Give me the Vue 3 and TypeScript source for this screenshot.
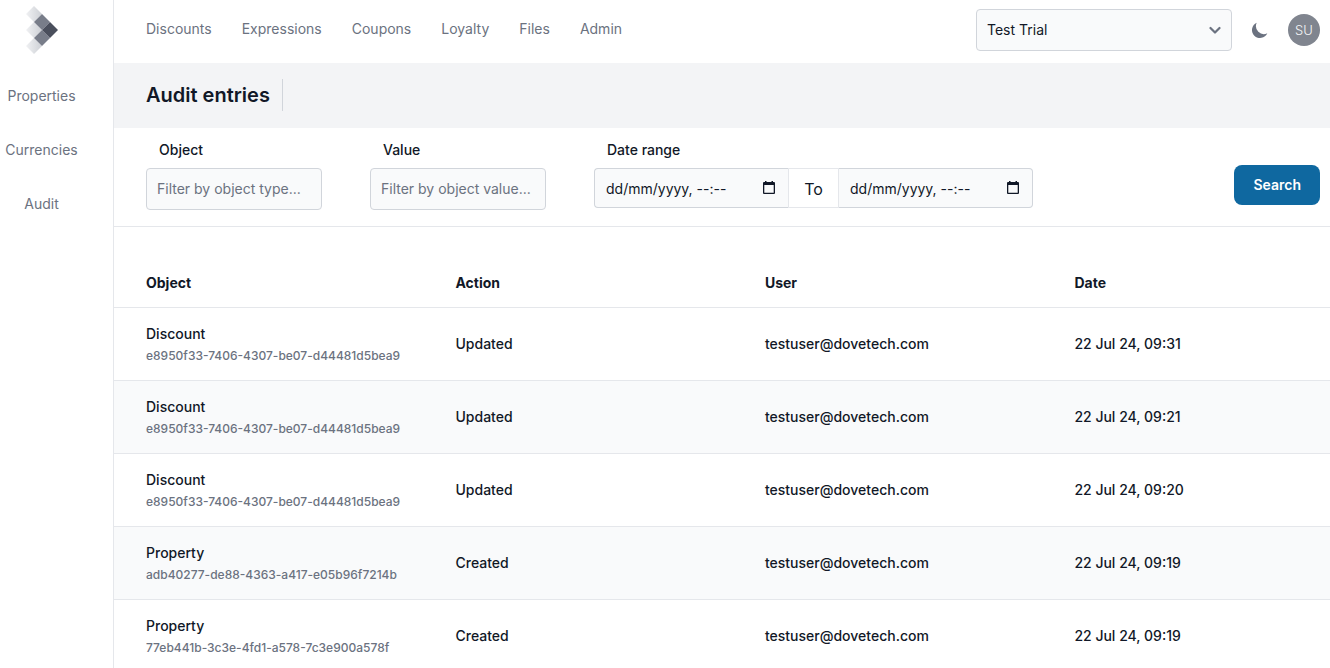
<script setup lang="ts">
import { ref } from 'vue'

interface AuditEntry {
  object: string
  id: string
  action: string
  user: string
  date: string
}

const topLinks: string[] = ['Discounts', 'Expressions', 'Coupons', 'Loyalty', 'Files', 'Admin']
const sideLinks: string[] = ['Properties', 'Currencies', 'Audit']
const columns: string[] = ['Object', 'Action', 'User', 'Date']

const project = ref('Test Trial')
const objectType = ref('')
const objectValue = ref('')
const dateFrom = ref('')
const dateTo = ref('')

const user = 'testuser@dovetech.com'
const discountId = 'e8950f33-7406-4307-be07-d44481d5bea9'
const entries: AuditEntry[] = [
  { object: 'Discount', id: discountId, action: 'Updated', user, date: '22 Jul 24, 09:31' },
  { object: 'Discount', id: discountId, action: 'Updated', user, date: '22 Jul 24, 09:21' },
  { object: 'Discount', id: discountId, action: 'Updated', user, date: '22 Jul 24, 09:20' },
  { object: 'Property', id: 'adb40277-de88-4363-a417-e05b96f7214b', action: 'Created', user, date: '22 Jul 24, 09:19' },
  { object: 'Property', id: '77eb441b-3c3e-4fd1-a578-7c3e900a578f', action: 'Created', user, date: '22 Jul 24, 09:19' },
]
</script>

<template>
  <div class="shell">
    <aside class="sidebar">
      <a href="#" class="logo" aria-label="Home">
        <svg width="34" height="48" viewBox="0 0 34 48" aria-hidden="true">
          <defs>
            <linearGradient id="fade" x1="0" y1="0" x2="1" y2="0">
              <stop offset="0" stop-color="#f0f1f3" />
              <stop offset="1" stop-color="#cdd0d5" />
            </linearGradient>
          </defs>
          <path d="M9 0l8 8-8 8-8-8zM9 16l8 8-8 8-8-8zM9 32l8 8-8 8-8-8z" fill="url(#fade)" />
          <path d="M17 8l8 8-8 8-8-8zM17 24l8 8-8 8-8-8z" fill="#787d89" />
          <path d="M25 16l8 8-8 8-8-8z" fill="#4a4f5c" />
        </svg>
      </a>
      <nav class="side-nav" aria-label="Settings">
        <a v-for="link in sideLinks" :key="link" href="#">{{ link }}</a>
      </nav>
    </aside>

    <div class="content">
      <header class="topbar">
        <nav class="top-nav" aria-label="Main">
          <a v-for="link in topLinks" :key="link" href="#">{{ link }}</a>
        </nav>
        <div class="tools">
          <div class="select-wrap">
            <select v-model="project" class="field" aria-label="Project">
              <option>Test Trial</option>
            </select>
            <svg class="chevron" width="12" height="8" viewBox="0 0 12 8" aria-hidden="true">
              <path d="M1.500 2L6 6.500l4.500-4.500" fill="none" stroke="#6b7280" stroke-width="2.200" stroke-linecap="round" stroke-linejoin="round" />
            </svg>
          </div>
          <button type="button" class="theme" aria-label="Dark mode">
            <svg width="20" height="20" viewBox="0 0 20 20" aria-hidden="true">
              <path d="M17.293 13.293A8 8 0 016.707 2.707a8.001 8.001 0 1010.586 10.586z" fill="#6b7280" />
            </svg>
          </button>
          <button type="button" class="avatar">SU</button>
        </div>
      </header>

      <div class="title-bar">
        <h1>Audit entries</h1>
      </div>

      <form class="filters" @submit.prevent>
        <div class="group">
          <label for="object-type">Object</label>
          <input id="object-type" v-model="objectType" class="field" type="text" placeholder="Filter by object type..." />
        </div>
        <div class="group">
          <label for="object-value">Value</label>
          <input id="object-value" v-model="objectValue" class="field" type="text" placeholder="Filter by object value..." />
        </div>
        <div class="group range-group">
          <label for="date-from">Date range</label>
          <div class="range">
            <div class="date start">
              <input id="date-from" v-model="dateFrom" type="text" placeholder="dd/mm/yyyy, --:--" />
              <button type="button" aria-label="Pick start date">
                <svg width="12" height="14" viewBox="0 0 12 14" aria-hidden="true">
                  <path d="M2 0h1.500v1h5V0H10v1h1a1 1 0 011 1v10a1 1 0 01-1 1H1a1 1 0 01-1-1V2a1 1 0 011-1h1zM1.300 4v7.700h9.400V4z" fill="#111827" fill-rule="evenodd" />
                </svg>
              </button>
            </div>
            <label class="to" for="date-to">To</label>
            <div class="date end">
              <input id="date-to" v-model="dateTo" type="text" placeholder="dd/mm/yyyy, --:--" />
              <button type="button" aria-label="Pick end date">
                <svg width="12" height="14" viewBox="0 0 12 14" aria-hidden="true">
                  <path d="M2 0h1.500v1h5V0H10v1h1a1 1 0 011 1v10a1 1 0 01-1 1H1a1 1 0 01-1-1V2a1 1 0 011-1h1zM1.300 4v7.700h9.400V4z" fill="#111827" fill-rule="evenodd" />
                </svg>
              </button>
            </div>
          </div>
        </div>
        <button type="submit" class="search">Search</button>
      </form>

      <table class="entries">
        <thead>
          <tr>
            <th v-for="column in columns" :key="column" scope="col">{{ column }}</th>
          </tr>
        </thead>
        <tbody>
          <tr v-for="(entry, index) in entries" :key="index">
            <td>
              <div>{{ entry.object }}</div>
              <div class="id">{{ entry.id }}</div>
            </td>
            <td>{{ entry.action }}</td>
            <td>{{ entry.user }}</td>
            <td>{{ entry.date }}</td>
          </tr>
        </tbody>
      </table>
    </div>
  </div>
</template>

<style>
html,
body {
  height: 100%;
  overflow: hidden;
  background: #fff;
}
</style>

<style scoped>
.shell,
.shell * {
  box-sizing: border-box;
}
.shell {
  display: grid;
  grid-template-columns: 114px minmax(0, 1fr);
  min-height: 100vh;
  color: #111827;
  font: 400 14px/20px Inter, "Liberation Sans", sans-serif;
}
input,
select,
button {
  font: inherit;
  color: inherit;
}
button {
  padding: 0;
  border: 0;
  background: none;
  cursor: pointer;
}
a {
  color: #6b7280;
  text-decoration: none;
}
.sidebar {
  border-right: 1px solid #e5e7eb;
}
.logo {
  display: block;
  width: 34px;
  height: 48px;
  margin: 6px 0 32px 25px;
}
.logo svg {
  display: block;
}
.side-nav {
  display: flex;
  flex-direction: column;
  gap: 34px;
  width: 83px;
  text-align: center;
}
.topbar {
  display: flex;
  align-items: center;
  justify-content: space-between;
  height: 63px;
  padding: 0 10px 4px 32px;
}
.top-nav {
  display: flex;
  gap: 30px;
  padding-bottom: 2px;
}
.tools {
  display: flex;
  align-items: center;
}
.select-wrap {
  display: grid;
  align-items: center;
  width: 256px;
}
.select-wrap > * {
  grid-area: 1 / 1;
}
.chevron {
  justify-self: end;
  margin-right: 11px;
  pointer-events: none;
}
.field {
  width: 100%;
  height: 42px;
  padding: 0 10px;
  border: 1px solid #d1d5db;
  border-radius: 4px;
  background: #f9fafb;
  appearance: none;
}
input.field {
  padding-bottom: 2px;
}
.field::placeholder {
  color: #6b7280;
  opacity: 1;
}
.theme {
  display: flex;
  margin: 0 18px;
}
.avatar {
  width: 32px;
  height: 32px;
  border-radius: 50%;
  background: #80858f;
  color: #f3f4f6;
  font-size: 13px;
  font-weight: 300;
}
.title-bar {
  display: flex;
  align-items: center;
  height: 65px;
  padding: 0 32px 2px;
  background: #f3f4f6;
}
h1 {
  margin: 0;
  padding-right: 12px;
  border-right: 1px solid #d1d5db;
  font-size: 20px;
  font-weight: 600;
  line-height: 32px;
}
.filters {
  display: flex;
  align-items: flex-start;
  gap: 48px;
  padding: 12px 10px 16px 32px;
  border-bottom: 1px solid #e5e7eb;
}
.group {
  display: flex;
  flex-direction: column;
  gap: 8px;
  width: 176px;
}
.group > label {
  padding-left: 13px;
  font-weight: 500;
}
.range-group {
  width: auto;
}
.range {
  display: flex;
}
.date {
  display: flex;
  align-items: center;
  width: 195px;
  height: 40px;
  padding: 0 13px 0 11px;
  border: 1px solid #d1d5db;
  background: #f9fafb;
}
.start {
  border-right-color: #e5e7eb;
  border-radius: 4px 0 0 4px;
}
.end {
  border-left-color: #e5e7eb;
  border-radius: 0 4px 4px 0;
}
.date input {
  flex: 1;
  min-width: 0;
  padding: 2px 0 0;
  border: 0;
  background: none;
}
.date input::placeholder {
  color: #111827;
  opacity: 1;
}
.date button {
  display: flex;
}
.to {
  width: 49px;
  height: 40px;
  border: solid #e5e7eb;
  border-width: 1px 0;
  font-size: 16px;
  line-height: 40px;
  text-align: center;
}
.search {
  height: 40px;
  margin: 25px 0 0 auto;
  padding: 0 19px;
  border-radius: 8px;
  background: #0f68a0;
  color: #fff;
  font-weight: 600;
}
.entries {
  width: 100%;
  margin-top: 32px;
  border-collapse: separate;
  border-spacing: 0;
  table-layout: fixed;
}
th,
td {
  padding: 16px 0 16px 32px;
  border-bottom: 1px solid #e5e7eb;
  text-align: left;
  white-space: nowrap;
  font-weight: 500;
}
th {
  padding-top: 14px;
  padding-bottom: 14px;
  font-weight: 700;
}
th:not(:last-child) {
  width: 25.45%;
}
tbody tr:nth-child(even) {
  background: #f9fafb;
}
.id {
  margin-top: 4px;
  color: #6b7280;
  font-size: 12px;
  line-height: 16px;
}
</style>
